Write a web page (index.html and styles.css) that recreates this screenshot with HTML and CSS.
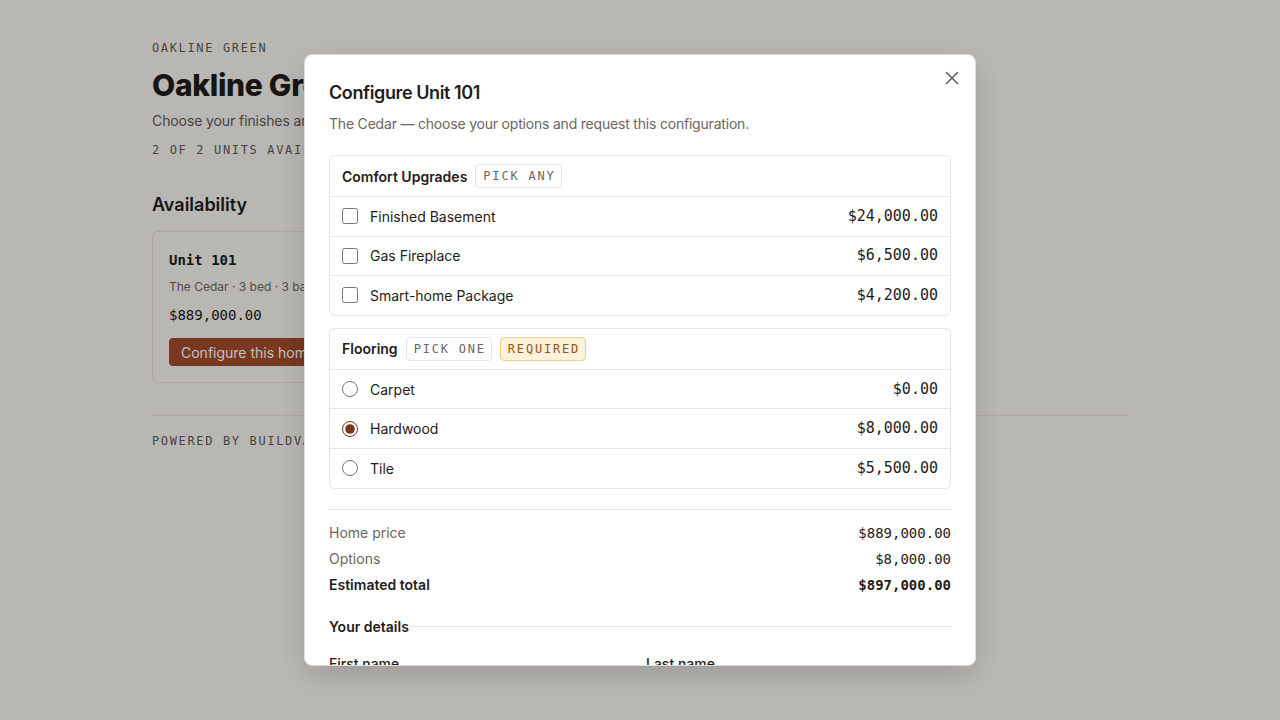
FILE: index.html
```html
<!DOCTYPE html>
<html lang="en">
<head>
    <meta charset="UTF-8">
    <meta name="viewport" content="width=device-width, initial-scale=1.0">
    <title>Oakline Green</title>

    <link rel="stylesheet" href="styles.css">
</head>
<body>

    <div class="page">

        <div class="eyebrow">Oakline Green</div>
        <h1 class="page_title">Oakline Green</h1>
        <p class="page_lead">Choose your finishes and request a configuration for your new home.</p>
        <div class="eyebrow units">2 of 2 units available</div>

        <h2 class="section_title">Availability</h2>

        <div class="cards">
            <div class="card">
                <div class="card_name">Unit 101</div>
                <div class="card_meta">The Cedar · 3 bed · 3 bath · 2,140 sq ft</div>
                <div class="card_price">$889,000.00</div>
                <button class="button_main">Configure this home</button>
            </div>
        </div>

        <div class="footer">Powered by BuildVantage</div>

    </div>

    <div class="overlay">

        <div class="modal">

            <button class="close" aria-label="Close">
                <svg width="14" height="14" viewBox="0 0 14 14"><path d="M1.5 1.5 L12.5 12.5 M12.5 1.5 L1.5 12.5" stroke="#5f5a55" stroke-width="1.5" stroke-linecap="round" fill="none"/></svg>
            </button>

            <h3 class="modal_title">Configure Unit 101</h3>
            <p class="modal_lead">The Cedar — choose your options and request this configuration.</p>

            <div class="group">
                <div class="group_head">
                    <span class="group_name">Comfort Upgrades</span>
                    <span class="tag">Pick any</span>
                </div>
                <label class="option">
                    <input type="checkbox">
                    <span class="option_name">Finished Basement</span>
                    <span class="price">$24,000.00</span>
                </label>
                <label class="option">
                    <input type="checkbox">
                    <span class="option_name">Gas Fireplace</span>
                    <span class="price">$6,500.00</span>
                </label>
                <label class="option">
                    <input type="checkbox">
                    <span class="option_name">Smart-home Package</span>
                    <span class="price">$4,200.00</span>
                </label>
            </div>

            <div class="group">
                <div class="group_head">
                    <span class="group_name">Flooring</span>
                    <span class="tag">Pick one</span>
                    <span class="tag tag_required">Required</span>
                </div>
                <label class="option">
                    <input type="radio" name="flooring">
                    <span class="option_name">Carpet</span>
                    <span class="price">$0.00</span>
                </label>
                <label class="option">
                    <input type="radio" name="flooring" checked>
                    <span class="option_name">Hardwood</span>
                    <span class="price">$8,000.00</span>
                </label>
                <label class="option">
                    <input type="radio" name="flooring">
                    <span class="option_name">Tile</span>
                    <span class="price">$5,500.00</span>
                </label>
            </div>

            <div class="summary">
                <div class="summary_row">
                    <span>Home price</span>
                    <span class="amount">$889,000.00</span>
                </div>
                <div class="summary_row">
                    <span>Options</span>
                    <span class="amount">$8,000.00</span>
                </div>
                <div class="summary_row total">
                    <span>Estimated total</span>
                    <span class="amount">$897,000.00</span>
                </div>
            </div>

            <div class="details_title">Your details</div>

            <div class="fields">
                <div class="field">
                    <label class="field_label">First name</label>
                    <input class="field_input" type="text">
                </div>
                <div class="field">
                    <label class="field_label">Last name</label>
                    <input class="field_input" type="text">
                </div>
            </div>

        </div>

    </div>

</body>
</html>
```

FILE: styles.css
```css
body{
    margin: 0;
    background-color: #f6f4f0;
    color: #1f1c19;
    font-family: Inter, "Noto Sans", sans-serif;
}

.page{
    width: 976px;
    margin: 0 auto;
    padding-top: 40px;
}

.eyebrow{
    font-family: "DejaVu Sans Mono", monospace;
    font-size: 12px;
    line-height: 16px;
    letter-spacing: 1.65px;
    text-transform: uppercase;
    color: #5f5a55;
}

.page_title{
    font-size: 30px;
    font-weight: 800;
    letter-spacing: -0.3px;
    line-height: 36px;
    margin: 11px 0 8px;
}

.page_lead{
    font-size: 14px;
    line-height: 20px;
    letter-spacing: -0.1px;
    color: #5f5a55;
    margin: 0 0 11px;
}

.units{
    margin-bottom: 35px;
}

.section_title{
    font-size: 18px;
    font-weight: 600;
    line-height: 24px;
    margin: 0 0 14px;
}

.cards{
    display: flex;
    gap: 16px;
}

.card{
    width: 320px;
    background-color: #f6f4f0;
    border: 1px solid #e2ddd6;
    border-radius: 6px;
    padding: 17px 16px 16px;
}

.card_name{
    font-family: "DejaVu Sans Mono", monospace;
    font-size: 14px;
    font-weight: bold;
    line-height: 22px;
}

.card_meta{
    font-size: 12px;
    line-height: 18px;
    color: #6b6660;
    margin-top: 7px;
}

.card_price{
    font-family: "DejaVu Sans Mono", monospace;
    font-size: 14px;
    line-height: 20px;
    margin-top: 9px;
}

.button_main{
    margin-top: 13px;
    height: 28px;
    padding: 0 12px;
    border: none;
    border-radius: 4px;
    background-color: #a34b2a;
    color: #ffffff;
    font-family: Inter, sans-serif;
    font-size: 14px;
    cursor: pointer;
}

.footer{
    margin-top: 32px;
    border-top: 1px solid #e2ddd6;
    padding-top: 18px;
    font-family: "DejaVu Sans Mono", monospace;
    font-size: 12px;
    letter-spacing: 1.65px;
    text-transform: uppercase;
    color: #5f5a55;
}

.overlay{
    position: fixed;
    inset: 0;
    background-color: rgba(0, 0, 0, 0.25);
    display: flex;
    align-items: center;
    justify-content: center;
}

.modal{
    position: relative;
    box-sizing: border-box;
    width: 672px;
    max-height: calc(100vh - 108px);
    overflow-y: auto;
    scrollbar-width: none;
    background-color: #ffffff;
    border: 1px solid #e2ddd6;
    border-radius: 8px;
    padding: 26px 24px 24px;
    box-shadow: 0 10px 30px rgba(0, 0, 0, 0.15);
}

.close{
    position: absolute;
    top: 12px;
    right: 12px;
    width: 22px;
    height: 22px;
    padding: 0;
    border: none;
    background: transparent;
    display: flex;
    align-items: center;
    justify-content: center;
    cursor: pointer;
}

.modal_title{
    font-size: 18px;
    font-weight: 600;
    line-height: 24px;
    letter-spacing: -0.4px;
    margin: 0 0 9px;
}

.modal_lead{
    font-size: 14px;
    line-height: 20px;
    letter-spacing: -0.2px;
    color: #6b6660;
    margin: 0 0 21px;
}

.group{
    border: 1px solid #e8e4de;
    border-radius: 6px;
    margin-bottom: 12px;
}

.group_head{
    display: flex;
    align-items: center;
    gap: 8px;
    padding: 8px 12px 8px;
}

.group_name{
    font-size: 14px;
    font-weight: 600;
}

.tag{
    font-family: "DejaVu Sans Mono", monospace;
    font-size: 12px;
    line-height: 20px;
    letter-spacing: 1.8px;
    text-transform: uppercase;
    color: #6b6660;
    border: 1px solid #e8e4de;
    border-radius: 4px;
    padding: 1px 5px 1px 7px;
}

.tag_required{
    color: #8a5a12;
    background-color: #fcf1da;
    border-color: #e8cf93;
}

.option{
    display: flex;
    align-items: center;
    gap: 12px;
    border-top: 1px solid #e8e4de;
    padding: 9.8px 12px 9.8px;
    line-height: 19px;
    font-size: 14px;
    cursor: pointer;
}

.option input{
    width: 16px;
    height: 16px;
    margin: 0;
    accent-color: #7a361c;
}

.option_name{
    flex: 1;
}

.price{
    font-family: "DejaVu Sans Mono", monospace;
    font-size: 15px;
}

.summary{
    margin-top: 20px;
    border-top: 1px solid #e8e4de;
    padding-top: 10px;
}

.summary_row{
    display: flex;
    justify-content: space-between;
    font-size: 14px;
    line-height: 26px;
    color: #6b6660;
}

.amount{
    font-family: "DejaVu Sans Mono", monospace;
    color: #1f1c19;
}

.total{
    color: #1f1c19;
    font-weight: 600;
}

.total .amount{
    font-weight: bold;
}

.details_title{
    display: flex;
    align-items: center;
    margin-top: 19px;
    font-size: 14px;
    font-weight: 600;
    line-height: 20px;
}

.details_title::after{
    content: "";
    flex: 1;
    height: 1px;
    background-color: #e8e4de;
}

.fields{
    display: grid;
    grid-template-columns: 1fr 1fr;
    gap: 12px;
    margin-top: 17px;
}

.field_label{
    display: block;
    font-size: 14px;
    font-weight: 500;
    line-height: 20px;
    margin-bottom: 6px;
}

.field_input{
    box-sizing: border-box;
    width: 100%;
    height: 36px;
    border: 1px solid #e2ddd6;
    border-radius: 4px;
}
```
